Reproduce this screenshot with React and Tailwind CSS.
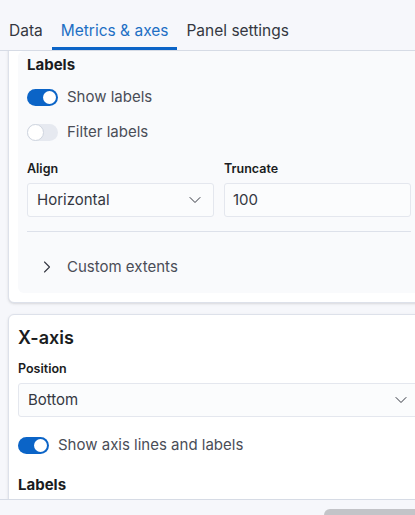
import { ChevronDown, ChevronRight } from "lucide-react"

const Toggle = ({ on }) => (
  <span
    className={
      on
        ? "relative inline-flex h-[17px] w-[31px] shrink-0 items-center rounded-full bg-[#0b64c7]"
        : "relative inline-flex h-[17px] w-[31px] shrink-0 items-center rounded-full bg-[#e6e9f0]"
    }
  >
    {on ? (
      <span className="absolute right-[2px] h-[13px] w-[13px] rounded-full bg-white" />
    ) : (
      <span className="absolute left-0 h-[17px] w-[17px] rounded-full border border-[#cfd5df] bg-white" />
    )}
  </span>
)

const Switch = ({ on, label }) => (
  <div className="flex h-[20px] items-center gap-[9px] text-[15px] leading-[20px] text-[#4a4d57]">
    <Toggle on={on} />
    <span>{label}</span>
  </div>
)

const FieldLabel = ({ children }) => (
  <div className="mb-[6px] text-[12.5px] font-semibold leading-[16px] text-[#1a1c21]">{children}</div>
)

const Select = ({ value }) => (
  <div className="flex h-[34px] items-center justify-between rounded-[3px] border border-[#e4e7ee] bg-[#fbfcfd] pl-[9px] pr-[8px] text-[15px] leading-[20px] text-[#343741]">
    <span>{value}</span>
    <ChevronDown size={20} strokeWidth={1.2} className="text-[#343741]" />
  </div>
)

export default function App() {
  return (
    <div
      className="flex h-[515px] w-[415px] flex-col overflow-hidden bg-[#f6f7fb]"
      style={{ fontFamily: "Inter, 'Noto Sans', sans-serif" }}
    >
      {/* tabs */}
      <div className="flex h-[51px] shrink-0 items-end border-b border-[#d6dbe5] text-[15.5px] leading-[20px] text-[#343741]">
        <div className="px-[9px] pb-[9px]">Data</div>
        <div className="border-b-[3px] border-[#0b64c7] px-[9px] pb-[6px] text-[#1d6fc4]">Metrics &amp; axes</div>
        <div className="px-[9px] pb-[9px]">Panel settings</div>
      </div>

      {/* scroll area */}
      <div className="h-[449px] shrink-0 overflow-hidden border-b border-[#d6dbe5] pl-[8px]">
        <div className="w-[422px]">
          {/* card 1, scrolled past its top */}
          <div className="-mt-[10px] rounded-md border border-[#dde1ea] bg-white p-[9px] shadow-sm">
            <div className="rounded-md bg-[#f9fafc] px-[9px] pb-[16px] pt-[4px]">
              <div className="text-[15px] font-bold leading-[20px] text-[#1a1c21]">Labels</div>
              <div className="mt-[12px] flex flex-col gap-[15px]">
                <Switch on label="Show labels" />
                <Switch label="Filter labels" />
              </div>
              <div className="mt-[19px] flex gap-[10px]">
                <div className="w-[187px]">
                  <FieldLabel>Align</FieldLabel>
                  <Select value="Horizontal" />
                </div>
                <div className="w-[187px]">
                  <FieldLabel>Truncate</FieldLabel>
                  <div className="flex h-[34px] items-center rounded-[3px] border border-[#e4e7ee] bg-[#fbfcfd] pl-[8px] text-[15px] leading-[20px] text-[#343741]">
                    100
                  </div>
                </div>
              </div>
              <div className="mt-[14px] w-[384px] border-t border-[#dde1ea]" />
              <div className="mt-[25px] flex h-[20px] items-center gap-[10px] pl-[10px] text-[15px] leading-[20px] text-[#4a4d57]">
                <ChevronRight size={20} strokeWidth={1.3} className="text-[#343741]" />
                <span>Custom extents</span>
              </div>
            </div>
          </div>

          {/* card 2 */}
          <div className="mt-[11px] rounded-md border border-[#dde1ea] bg-white px-[9px] pb-[20px] pt-[11px] shadow-sm">
            <div className="text-[18px] font-semibold leading-[24px] text-[#1a1c21]">X-axis</div>
            <div className="mt-[11px]">
              <FieldLabel>Position</FieldLabel>
              <Select value="Bottom" />
            </div>
            <div className="mt-[18px]">
              <Switch on label="Show axis lines and labels" />
            </div>
            <div className="mt-[20px] text-[15px] font-bold leading-[20px] text-[#1a1c21]">Labels</div>
          </div>
        </div>
      </div>

      {/* footer */}
      <div className="flex flex-1 justify-end pt-[9px]">
        <div className="h-[10px] w-[91px] rounded-tl-md bg-[#c3c4c8]" />
      </div>
    </div>
  )
}
